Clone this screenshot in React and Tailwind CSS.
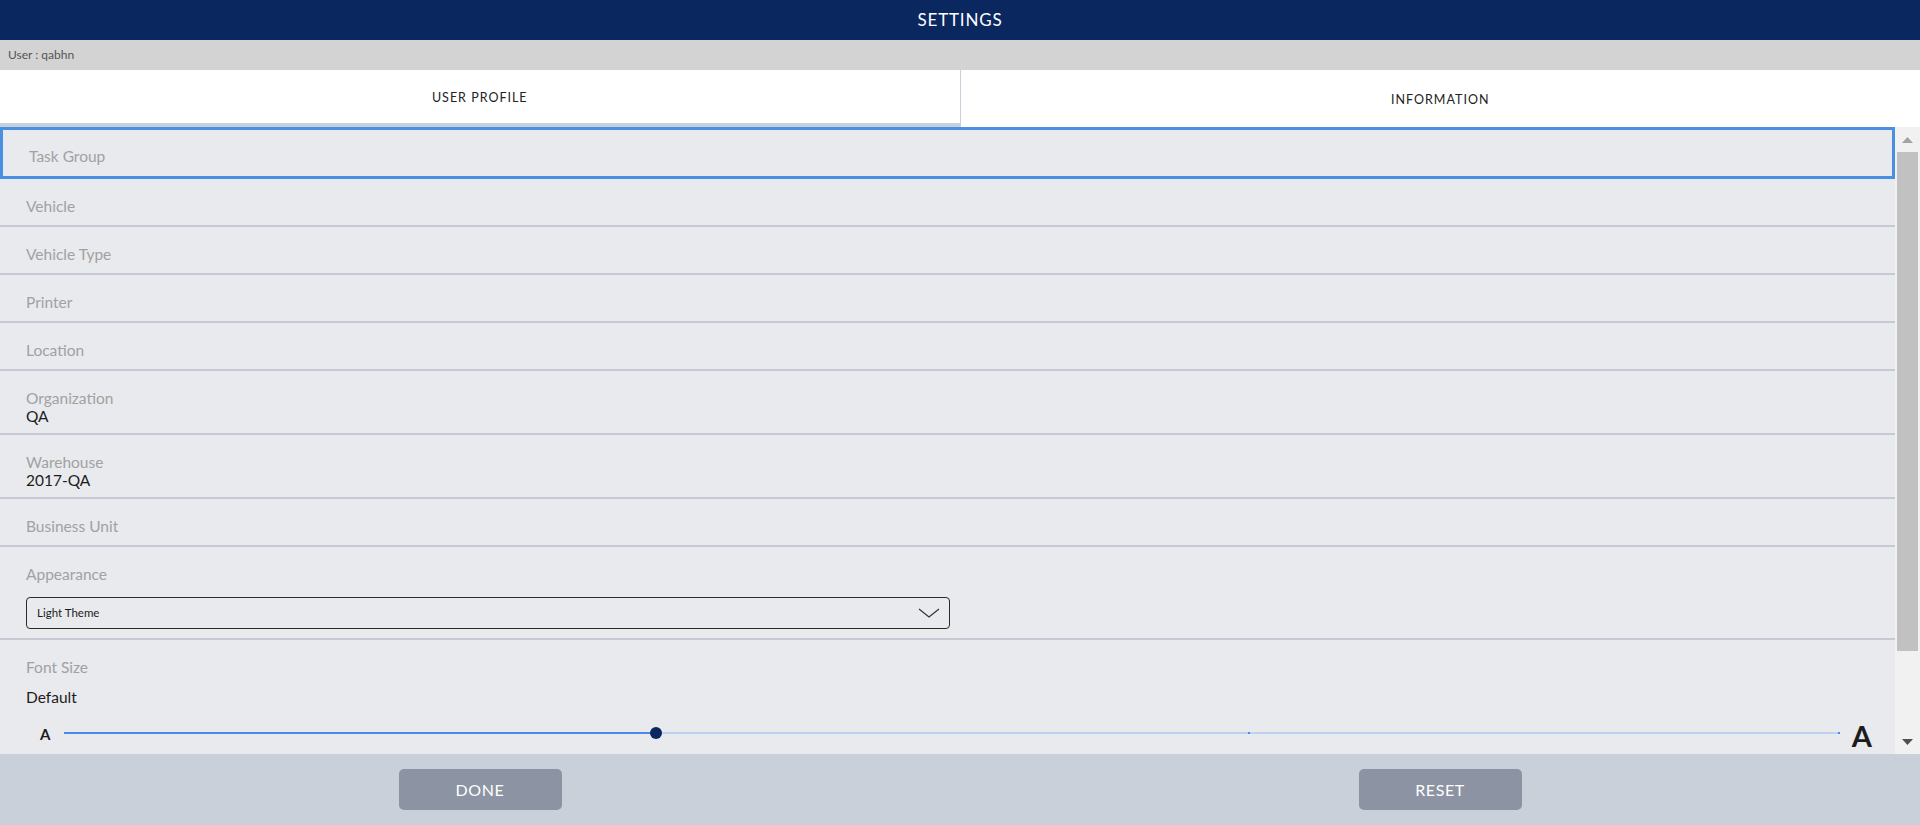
import React from "react";

const Label = ({ children }) => (
  <div className="text-[15.5px] leading-[18px] text-[#a1a1a1]">{children}</div>
);
const Value = ({ children }) => (
  <div className="text-[15.5px] leading-[18px] text-[#1c1c1c]">{children}</div>
);

const Row = ({ label, value }) => (
  <div className="border-b-2 border-[#c4c9d3] pl-[26px] pt-[18px] pb-[10px]">
    <Label>{label}</Label>
    {value && (
      <div className="-mb-[2px]">
        <Value>{value}</Value>
      </div>
    )}
  </div>
);

export default function App() {
  return (
    <div className="w-[1920px] h-[825px] flex flex-col overflow-hidden bg-[#e9eaee] [font-family:Lato,'Open_Sans',sans-serif]">
      {/* Header */}
      <div className="h-[40px] bg-[#0a2760] flex items-center justify-center">
        <span className="text-white text-[17px] tracking-[0.8px]">SETTINGS</span>
      </div>
      {/* User bar */}
      <div className="h-[30px] bg-[#d3d3d3] flex items-center pl-[8px]">
        <span className="text-[12px] text-[#555]">User : qabhn</span>
      </div>
      {/* Tabs */}
      <div className="h-[57px] flex bg-white">
        <div className="flex-1 flex items-center justify-center border-b-[4px] border-r border-[#c9d0da] pt-[3px]">
          <span className="text-[12.5px] tracking-[1px] text-[#222]">USER PROFILE</span>
        </div>
        <div className="flex-1 flex items-center justify-center pt-[3px]">
          <span className="text-[12.5px] tracking-[1px] text-[#222]">INFORMATION</span>
        </div>
      </div>
      {/* Content */}
      <div className="flex-1 flex min-h-0">
        <div className="flex-1 flex flex-col overflow-hidden">
          <div className="h-[52px] shrink-0 border-[3px] border-[#4a90e2] pl-[26px] pt-[17px]">
            <Label>Task Group</Label>
          </div>
          <Row label="Vehicle" />
          <Row label="Vehicle Type" />
          <Row label="Printer" />
          <Row label="Location" />
          <Row label="Organization" value="QA" />
          <Row label="Warehouse" value="2017-QA" />
          <Row label="Business Unit" />
          <div className="border-b-2 border-[#c4c9d3] pl-[26px] pt-[18px] pb-[9px]">
            <Label>Appearance</Label>
            <div className="mt-[14px] w-[924px] h-[32px] border border-[#2a2a2a] rounded-[4px] flex items-center justify-between pl-[10px] pr-[9px]">
              <span className="text-[11.5px] text-[#1c1c1c]">Light Theme</span>
              <svg width="22" height="10" viewBox="0 0 22 10">
                <polyline points="1,1 11,9 21,1" fill="none" stroke="#333" strokeWidth="1.2" />
              </svg>
            </div>
          </div>
          <div className="pl-[26px] pt-[18px] shrink-0">
            <Label>Font Size</Label>
            <div className="mt-[12px]">
              <Value>Default</Value>
            </div>
            <div className="mt-[13px] h-[28px] flex items-center pl-[14px] pr-[23px]">
              <span className="w-[10px] text-[15px] font-bold text-[#1c1c1c] leading-none mt-[3px]">A</span>
              <div className="flex-1 ml-[14px] mr-[12px] relative h-[12px] flex items-center">
                <div className="w-full h-[2px] bg-[#bcd0f0]" />
                <div className="absolute left-0 w-1/3 h-[2px] bg-[#4a8ae8]" />
                <div className="absolute left-[66.66%] w-[2px] h-[2px] bg-[#4a8ae8]" />
                <div className="absolute right-0 w-[2px] h-[2px] bg-[#4a8ae8]" />
                <div className="absolute left-[33.33%] -translate-x-1/2 w-[12px] h-[12px] rounded-full bg-[#0a2760]" />
              </div>
              <span className="text-[29px] font-bold text-[#1c1c1c] leading-none mt-[4px]">A</span>
            </div>
          </div>
        </div>
        {/* Scrollbar */}
        <div className="w-[25px] bg-[#f1f1f1] flex flex-col items-center">
          <div className="h-[25px] flex items-center justify-center">
            <svg width="11" height="6" viewBox="0 0 11 6">
              <polygon points="0,6 5.5,0 11,6" fill="#a3a3a3" />
            </svg>
          </div>
          <div className="w-[21px] h-[499px] bg-[#c1c1c1]" />
          <div className="flex-1" />
          <div className="h-[25px] flex items-center justify-center">
            <svg width="11" height="6" viewBox="0 0 11 6">
              <polygon points="0,0 11,0 5.5,6" fill="#505050" />
            </svg>
          </div>
        </div>
      </div>
      {/* Footer */}
      <div className="h-[71px] bg-[#c9d0da] flex">
        <div className="flex-1 flex items-center justify-center">
          <button className="w-[163px] h-[41px] rounded-[5px] bg-[#8c93a2] text-white text-[16px] tracking-[0.6px]">DONE</button>
        </div>
        <div className="flex-1 flex items-center justify-center">
          <button className="w-[163px] h-[41px] rounded-[5px] bg-[#8c93a2] text-white text-[16px] tracking-[0.6px]">RESET</button>
        </div>
      </div>
    </div>
  );
}
